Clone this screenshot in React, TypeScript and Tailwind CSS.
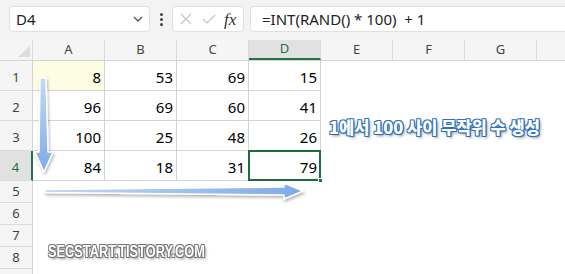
import React from "react";

const cols = ["A", "B", "C", "D", "E", "F", "G", ""];
const data = [
  [8, 53, 69, 15],
  [96, 69, 60, 41],
  [100, 25, 48, 26],
  [84, 18, 31, 79],
];

export default function App() {
  return (
    <div
      className="relative w-[565px] h-[274px] overflow-hidden bg-white"
      style={{ fontFamily: '"Noto Sans", "Open Sans", sans-serif' }}
    >
      {/* top bar */}
      <div className="h-[40px] bg-[#f3f3f3] flex items-start pt-[6px] pl-[9px]">
        <div className="w-[141px] h-[26px] bg-white border border-[#e1e1e1] rounded-[4px] flex items-center justify-between pl-[6px] pr-[5px]">
          <span className="text-[15px] text-[#222] leading-none">D4</span>
          <svg width="12" height="8" viewBox="0 0 12 8">
            <path d="M2 2 L6 6 L10 2" fill="none" stroke="#555" strokeWidth="1.3" />
          </svg>
        </div>
        <div className="w-[22px] h-[26px] flex flex-col items-center justify-center gap-[2px]">
          <span className="w-[3px] h-[3px] rounded-full bg-[#444]" />
          <span className="w-[3px] h-[3px] rounded-full bg-[#444]" />
          <span className="w-[3px] h-[3px] rounded-full bg-[#444]" />
        </div>
        <div className="w-[72px] h-[26px] bg-white border border-[#e1e1e1] rounded-[4px] flex items-center pl-[6px]">
          <svg width="14" height="14" viewBox="0 0 14 14">
            <path d="M2 2 L12 12 M12 2 L2 12" stroke="#c4c4c4" strokeWidth="1.2" />
          </svg>
          <svg width="16" height="14" viewBox="0 0 16 14" className="ml-[8px]">
            <path d="M2 7 L6 11 L14 3" fill="none" stroke="#c4c4c4" strokeWidth="1.2" />
          </svg>
          <span
            className="ml-[7px] text-[17px] italic text-[#333] leading-none"
            style={{ fontFamily: '"Liberation Serif", serif' }}
          >
            fx
          </span>
        </div>
        <div className="ml-[6px] flex-1 h-[26px] bg-white border border-[#e1e1e1] border-r-0 rounded-l-[4px] flex items-center pl-[11px]">
          <span className="text-[15px] text-[#222] leading-none whitespace-pre">=INT(RAND() * 100)  + 1</span>
        </div>
      </div>

      {/* column header */}
      <div className="flex h-[21px] bg-[#f5f5f5] border-b border-[#d4d4d4]">
        <div className="w-[33px] shrink-0 border-r border-[#dadada] relative">
          <svg width="33" height="20" viewBox="0 0 33 20" className="absolute left-0 top-0">
            <polygon points="18,17 30,17 30,6" fill="#dcdcdc" />
          </svg>
        </div>
        {cols.map((c, i) =>
          c === "D" ? (
            <div
              key={i}
              className="w-[72px] shrink-0 bg-[#e1e1e1] border-r border-[#dadada] border-b-2 border-b-[#217346] flex items-center justify-center text-[13px] text-[#217346]"
            >
              {c}
            </div>
          ) : (
            <div
              key={i}
              className="w-[72px] shrink-0 border-r border-[#dadada] flex items-center justify-center text-[13px] text-[#444]"
            >
              {c}
            </div>
          )
        )}
      </div>

      {/* data rows */}
      {data.map((row, ri) => (
        <div key={ri} className="flex h-[30px]">
          {ri === 3 ? (
            <div className="w-[33px] shrink-0 bg-[#e1e1e1] border-r-2 border-[#217346] border-b border-b-[#dadada] flex items-end justify-center pb-[3px] text-[13px] text-[#217346]">
              {ri + 1}
            </div>
          ) : (
            <div className="w-[33px] shrink-0 bg-[#f5f5f5] border-r border-[#d4d4d4] border-b border-b-[#dadada] flex items-end justify-center pb-[3px] text-[13px] text-[#444]">
              {ri + 1}
            </div>
          )}
          {row.map((v, ci) => {
            const sel = ri === 3 && ci === 3;
            const yellow = ri === 0 && ci === 0;
            return (
              <div
                key={ci}
                className={
                  "relative w-[72px] shrink-0 border-r border-b border-[#d4d4d4] flex items-end justify-end pr-[3px] pb-[2px] text-[15px] text-black " +
                  (yellow ? "bg-[#fdfde4]" : "bg-white")
                }
              >
                {v}
                {sel && (
                  <>
                    <div className="absolute -left-[1px] -top-[1px] w-[73px] h-[31px] border-2 border-[#1e6b3e]" />
                    <div className="absolute -right-[3px] -bottom-[3px] w-[5px] h-[5px] bg-[#1e6b3e] border border-white" />
                  </>
                )}
              </div>
            );
          })}
        </div>
      ))}

      {/* empty rows */}
      {["5", "6", "7", "8", ""].map((n, i) => (
        <div key={i} className="flex h-[22px]">
          <div className="w-[33px] shrink-0 bg-[#f5f5f5] border-r border-[#d4d4d4] border-b border-b-[#dadada] flex items-center justify-center text-[13px] text-[#444]">
            {n}
          </div>
        </div>
      ))}

      {/* arrows */}
      <svg className="absolute left-0 top-0" width="565" height="274" viewBox="0 0 565 274">
        <defs>
          <linearGradient id="gv" x1="0" y1="0" x2="0" y2="1">
            <stop offset="0" stopColor="#c4d9f4" />
            <stop offset="1" stopColor="#7fabe6" />
          </linearGradient>
          <linearGradient id="gh" x1="0" y1="0" x2="1" y2="0">
            <stop offset="0" stopColor="#c4d9f4" />
            <stop offset="1" stopColor="#7fabe6" />
          </linearGradient>
          <filter id="sh" x="-20%" y="-20%" width="140%" height="160%">
            <feDropShadow dx="1" dy="2" stdDeviation="1.5" floodColor="#000" floodOpacity="0.3" />
          </filter>
        </defs>
        <polygon
          points="40,78 46,78 48,152 53,152 44,172 35,152 39,152"
          fill="url(#gv)"
          stroke="#fff"
          strokeWidth="1.5"
          strokeLinejoin="round"
          filter="url(#sh)"
        />
        <polygon
          points="45,189.5 284,187 284,183 303,191 284,199 284,195 45,192.5"
          fill="url(#gh)"
          stroke="#fff"
          strokeWidth="1.5"
          strokeLinejoin="round"
          filter="url(#sh)"
        />
      </svg>

      {/* overlay texts */}
      <div
        className="absolute left-[329px] top-[119px] text-[16.5px] font-black text-white whitespace-pre leading-none [text-shadow:0_0_1px_#2f74c0,1px_1px_0_#2f74c0,-1px_-1px_0_#2f74c0,1px_-1px_0_#2f74c0,-1px_1px_0_#2f74c0,0_1px_0_#2f74c0,1px_0_0_#2f74c0,2px_2px_3px_rgba(0,0,0,0.45)]"
        style={{ fontFamily: '"Noto Sans CJK KR", sans-serif' }}
      >
        1에서 100 사이 무작위 수 생성
      </div>
      <div
        className="absolute left-[48px] top-[244px] origin-left scale-x-[0.8] text-[16px] font-bold text-white whitespace-pre leading-none [text-shadow:0_0_1px_#777,1px_1px_0_#777,-1px_-1px_0_#777,1px_-1px_0_#777,-1px_1px_0_#777,2px_2px_3px_rgba(0,0,0,0.5)]"
        style={{ fontFamily: '"Liberation Sans", sans-serif' }}
      >
        SECSTART.TISTORY.COM
      </div>
    </div>
  );
}
